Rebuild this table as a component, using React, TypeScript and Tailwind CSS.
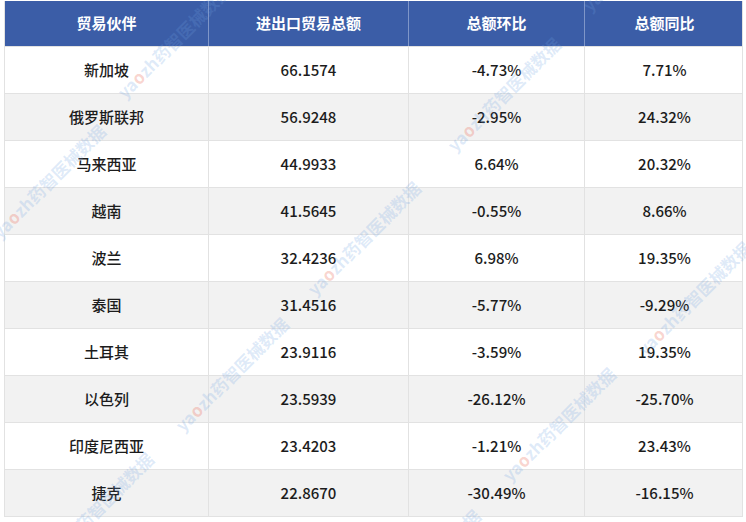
import React from "react";

const rows = [
  ["新加坡", "66.1574", "-4.73%", "7.71%"],
  ["俄罗斯联邦", "56.9248", "-2.95%", "24.32%"],
  ["马来西亚", "44.9933", "6.64%", "20.32%"],
  ["越南", "41.5645", "-0.55%", "8.66%"],
  ["波兰", "32.4236", "6.98%", "19.35%"],
  ["泰国", "31.4516", "-5.77%", "-9.29%"],
  ["土耳其", "23.9116", "-3.59%", "19.35%"],
  ["以色列", "23.5939", "-26.12%", "-25.70%"],
  ["印度尼西亚", "23.4203", "-1.21%", "23.43%"],
  ["捷克", "22.8670", "-30.49%", "-16.15%"],
];

const headers = ["贸易伙伴", "进出口贸易总额", "总额环比", "总额同比"];

// start points (bottom-left of each watermark line)
const marks = [
  [-5, 235],
  [120, 95],
  [178, 428],
  [43, 563],
  [310, 292],
  [450, 148],
  [505, 478],
  [370, 620],
  [640, 352],
  [585, 8],
];

function Watermark({ x, y }: { x: number; y: number }) {
  return (
    <div
      className="absolute origin-left -rotate-45 whitespace-nowrap text-[17px] font-semibold leading-none text-[rgba(110,160,225,0.22)] pointer-events-none"
      style={{ left: x, top: y - 9 }}
    >
      ya<span className="text-[rgba(235,110,90,0.3)]">o</span>zh药智医械数据
    </div>
  );
}

export default function App() {
  return (
    <div className="relative w-[746px] h-[522px] overflow-hidden bg-white font-['Noto_Sans_CJK_SC','Noto_Sans',sans-serif]">
      <div className="ml-[4px] mt-[1px] w-[739px] border-b border-x border-[#e2e2e2]">
        <div className="grid grid-cols-[203px_200px_176px_160px] h-[45px] bg-[#3b5da7] text-white font-bold text-[15px]">
          {headers.map((h, i) => (
            <div
              key={h}
              className={`flex items-center justify-center ${i > 0 ? "border-l border-[#7f96c8]" : ""}`}
            >
              {h}
            </div>
          ))}
        </div>
        {rows.map((r, ri) => (
          <div
            key={r[0]}
            className={`grid grid-cols-[203px_200px_176px_160px] h-[47px] border-t border-[#e2e2e2] text-[15px] font-medium text-[#1c1c1c] ${ri % 2 === 1 ? "bg-[#f2f2f2]" : "bg-white"}`}
          >
            {r.map((c, ci) => (
              <div
                key={ci}
                className={`flex items-center justify-center ${ci > 0 ? "border-l border-[#e2e2e2]" : ""}`}
              >
                {c}
              </div>
            ))}
          </div>
        ))}
      </div>
      {marks.map(([x, y], i) => (
        <Watermark key={i} x={x} y={y} />
      ))}
    </div>
  );
}
